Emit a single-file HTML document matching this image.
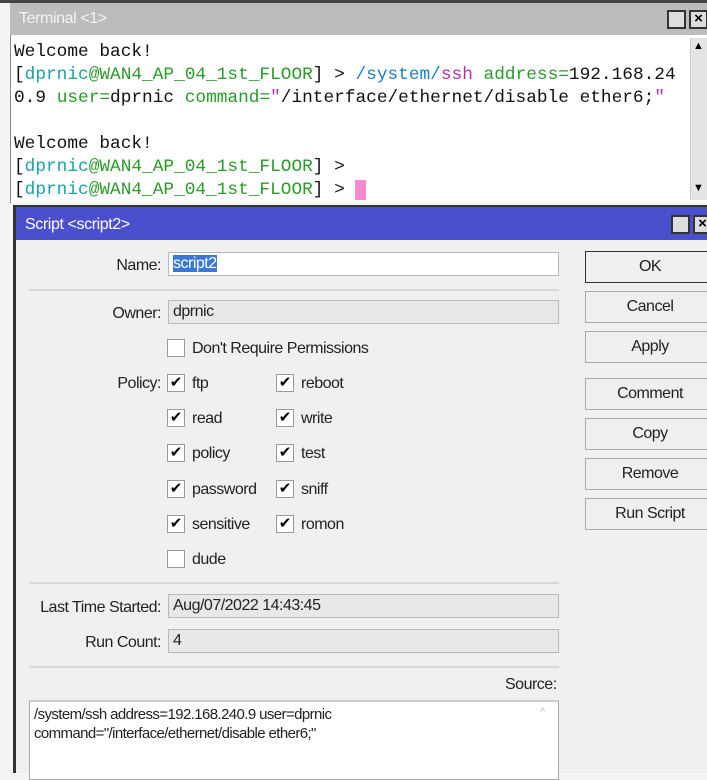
<!DOCTYPE html>
<html><head><meta charset="utf-8"><style>
*{margin:0;padding:0;box-sizing:border-box}
body{width:707px;height:773px;overflow:hidden;background:#f4f4f4;position:relative;font-family:"Liberation Sans",sans-serif}
.abs{position:absolute}
.term{left:10px;top:3px;width:697px;height:200px;background:#fff;border-left:1px solid #888}
.ttl{left:10px;top:3px;width:697px;height:32px;background:#bcbcbc;color:#f4f4f4;font-size:16px;padding:7px 0 0 9px;letter-spacing:-.4px}
.mono{font-family:"Liberation Mono","DejaVu Sans Mono",monospace;font-size:17.8px;white-space:pre;color:#111;line-height:23px}
.c{color:#1aa0a8}.g{color:#2a9a2a}.m{color:#b030b0}.b{color:#2080c0}
.btnsq{width:19px;height:19px;border:2px solid #333;background:#ddd}
.win{left:13px;top:205px;width:694px;height:568px;background:#f0f0f0;border-left:3px solid #333;border-top:2px solid #333}
.wt{left:16px;top:207px;width:691px;height:33px;background:#4a4fcd;color:#fff;font-size:16px;padding:9px 0 0 9px;letter-spacing:-.4px}
.lbl{font-size:16px;color:#222;letter-spacing:-.5px;text-align:right;width:150px;left:11px}
.fld{left:168px;width:391px;height:24px;border:1px solid #b8b8b8;background:#e8e8e8;font-size:16px;letter-spacing:-.5px;padding:2px 4px;color:#222}
.sep{left:29px;width:530px;height:2px;background:#d8d8d8}
.cb{width:18px;height:18px;border:1px solid #999;background:#fff;font-size:15px;line-height:16px;text-align:center;color:#000}
.ct{font-size:16px;color:#222;letter-spacing:-.5px}
.bt{left:585px;width:130px;height:32px;border:1px solid #aaa;background:#efefef;font-size:16px;letter-spacing:-.5px;text-align:center;line-height:30px;color:#222}
</style></head><body>
<div class="abs" style="left:0;top:0;width:707px;height:3px;background:#444"></div>
<div class="abs term"></div>
<div class="abs ttl">Terminal &lt;1&gt;</div>
<div class="abs btnsq" style="left:667px;top:10px"></div>
<div class="abs btnsq" style="left:689px;top:10px;font-size:15px;line-height:14px;text-align:center;font-weight:bold">×</div>
<div class="abs" style="left:690px;top:38px;width:17px;height:162px;background:#e4e4e4;border-left:1px solid #ccc"></div>
<div class="abs" style="left:693px;top:40px;font-size:11px">▲</div>
<div class="abs" style="left:693px;top:182px;font-size:11px">▼</div>
<div class="abs mono" style="left:14px;top:41px;font-family:'Liberation Mono','Courier New',monospace">Welcome back!
[<span class="c">dprnic</span><span class="g">@WAN4_AP_04_1st_FLOOR</span>] &gt; <span class="b">/system/</span><span class="m">ssh</span> <span class="g">address=</span>192.168.24
0.9 <span class="g">user=</span>dprnic <span class="g">command=</span><span class="m">"</span>/interface/ethernet/disable ether6;<span class="m">"</span>

Welcome back!
[<span class="c">dprnic</span><span class="g">@WAN4_AP_04_1st_FLOOR</span>] &gt;
[<span class="c">dprnic</span><span class="g">@WAN4_AP_04_1st_FLOOR</span>] &gt; <span style="background:#f48bd0">&nbsp;</span></div>

<div class="abs win"></div>
<div class="abs wt">Script &lt;script2&gt;</div>
<div class="abs btnsq" style="left:671px;top:215px"></div>
<div class="abs btnsq" style="left:693px;top:215px;font-size:15px;line-height:14px;text-align:center;font-weight:bold">×</div>

<div class="abs lbl" style="top:257px">Name:</div>
<div class="abs fld" style="top:252px;background:#fff"><span style="background:#3a78d8;color:#fff">script2</span></div>
<div class="abs sep" style="top:289px"></div>
<div class="abs lbl" style="top:305px">Owner:</div>
<div class="abs fld" style="top:300px">dprnic</div>

<div class="abs cb" style="left:167px;top:339px"></div><div class="abs ct" style="left:192px;top:340px">Don't Require Permissions</div>
<div class="abs lbl" style="top:375px">Policy:</div>
<div class="abs cb" style="left:167px;top:374px">✔</div><div class="abs ct" style="left:192px;top:375px">ftp</div>
<div class="abs cb" style="left:276px;top:374px">✔</div><div class="abs ct" style="left:301px;top:375px">reboot</div>
<div class="abs cb" style="left:167px;top:409px">✔</div><div class="abs ct" style="left:192px;top:410px">read</div>
<div class="abs cb" style="left:276px;top:409px">✔</div><div class="abs ct" style="left:301px;top:410px">write</div>
<div class="abs cb" style="left:167px;top:444px">✔</div><div class="abs ct" style="left:192px;top:445px">policy</div>
<div class="abs cb" style="left:276px;top:444px">✔</div><div class="abs ct" style="left:301px;top:445px">test</div>
<div class="abs cb" style="left:167px;top:480px">✔</div><div class="abs ct" style="left:192px;top:481px">password</div>
<div class="abs cb" style="left:276px;top:480px">✔</div><div class="abs ct" style="left:301px;top:481px">sniff</div>
<div class="abs cb" style="left:167px;top:515px">✔</div><div class="abs ct" style="left:192px;top:516px">sensitive</div>
<div class="abs cb" style="left:276px;top:515px">✔</div><div class="abs ct" style="left:301px;top:516px">romon</div>
<div class="abs cb" style="left:167px;top:550px"></div><div class="abs ct" style="left:192px;top:551px">dude</div>

<div class="abs sep" style="top:582px"></div>
<div class="abs lbl" style="top:599px">Last Time Started:</div>
<div class="abs fld" style="top:594px">Aug/07/2022 14:43:45</div>
<div class="abs lbl" style="top:634px">Run Count:</div>
<div class="abs fld" style="top:629px">4</div>
<div class="abs sep" style="top:666px"></div>
<div class="abs ct" style="left:505px;top:676px">Source:</div>
<div class="abs" style="left:29px;top:700px;width:530px;height:80px;background:#fff;border:1px solid #aaa;border-top:2px solid #ccc;font-size:15px;letter-spacing:-.6px;padding:3px 4px;line-height:19px;color:#222">/system/ssh address=192.168.240.9 user=dprnic<br>command="/interface/ethernet/disable ether6;"</div>
<div class="abs" style="left:540px;top:706px;font-size:11px;color:#bbb">^</div>

<div class="abs bt" style="top:251px;border:1px solid #333">OK</div>
<div class="abs bt" style="top:291px">Cancel</div>
<div class="abs bt" style="top:331px">Apply</div>
<div class="abs bt" style="top:378px">Comment</div>
<div class="abs bt" style="top:418px">Copy</div>
<div class="abs bt" style="top:458px">Remove</div>
<div class="abs bt" style="top:498px">Run Script</div>
</body></html>
